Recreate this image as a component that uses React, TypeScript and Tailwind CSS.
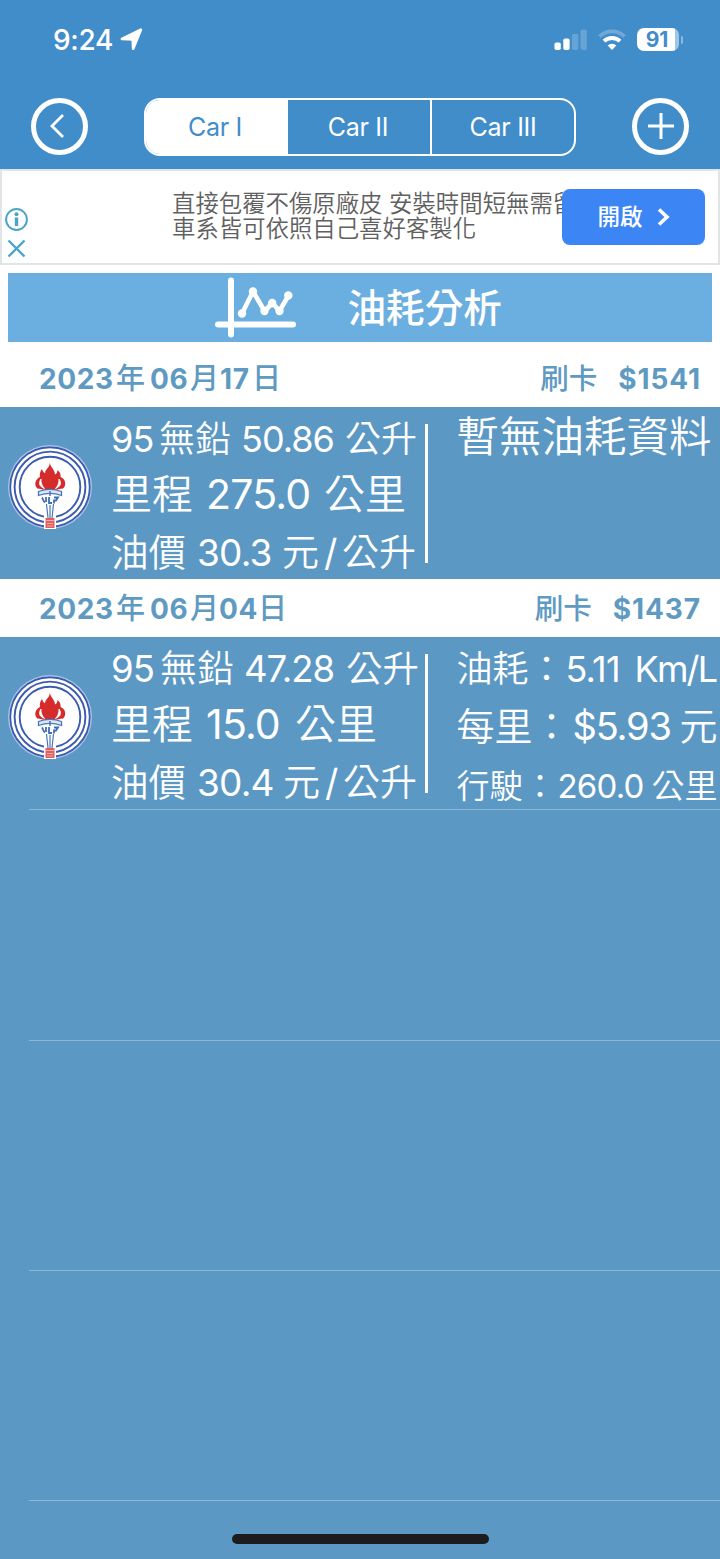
import React from 'react';

interface Segment {
  text: string;
  className: string;
}

interface FuelRecord {
  date: Segment[];
  price: string;
  left: Segment[][];
  right: Segment[][];
}

const records: FuelRecord[] = [
  {
    date: [
      { text: '2023', className: 'w-[77px] tracking-[0.6px]' },
      { text: '年', className: 'w-[34px] text-[29px] font-medium' },
      { text: '06', className: 'w-[40px] tracking-[0.6px]' },
      { text: '月', className: 'w-[30px] text-[29px] font-medium' },
      { text: '17', className: 'w-[32px] tracking-[0.6px]' },
      { text: '日', className: 'w-[30px] text-[29px] font-medium' },
    ],
    price: '$1541',
    left: [
      [
        { text: '95', className: 'w-[48px] -ml-px text-[36px] font-normal tracking-[-0.8px]' },
        { text: '無鉛', className: 'w-[82px] text-[36px]' },
        { text: '50.86', className: 'w-[104px] text-[36px] font-normal tracking-[-1px]' },
        { text: '公升', className: 'w-[74px] text-[36px]' },
      ],
      [
        { text: '里程', className: 'w-[95px] -ml-px text-[41px]' },
        { text: '275.0', className: 'w-[118px] text-[41px] font-normal tracking-[-0.8px]' },
        { text: '公里', className: 'w-[82px] text-[41px]' },
      ],
      [
        { text: '油價', className: 'w-[86px] -ml-px text-[37.5px]' },
        { text: '30.3', className: 'w-[85px] text-[37px] font-normal tracking-[-0.8px]' },
        { text: '元', className: 'w-[42px] text-[37px]' },
        { text: '/', className: 'w-[18px] text-[37px] font-normal' },
        { text: '公升', className: 'w-[75px] text-[37px]' },
      ],
    ],
    right: [[{ text: '暫無油耗資料', className: 'text-[42.5px]' }]],
  },
  {
    date: [
      { text: '2023', className: 'w-[77px] tracking-[0.6px]' },
      { text: '年', className: 'w-[34px] text-[29px] font-medium' },
      { text: '06', className: 'w-[40px] tracking-[0.6px]' },
      { text: '月', className: 'w-[29px] text-[29px] font-medium' },
      { text: '04', className: 'w-[39px] tracking-[0.6px]' },
      { text: '日', className: 'w-[30px] text-[29px] font-medium' },
    ],
    price: '$1437',
    left: [
      [
        { text: '95', className: 'w-[49px] -ml-px text-[36.5px] font-normal tracking-[-0.8px]' },
        { text: '無鉛', className: 'w-[84px] text-[37px]' },
        { text: '47.28', className: 'w-[102px] text-[36.5px] font-normal tracking-[-1px]' },
        { text: '公升', className: 'w-[74px] text-[36.5px]' },
      ],
      [
        { text: '里程', className: 'w-[95px] -ml-px text-[41px]' },
        { text: '15.0', className: 'w-[89px] text-[41px] font-normal tracking-[-0.8px]' },
        { text: '公里', className: 'w-[82px] text-[41px]' },
      ],
      [
        { text: '油價', className: 'w-[86px] -ml-px text-[37.5px]' },
        { text: '30.4', className: 'w-[86px] text-[37px] font-normal tracking-[-0.8px]' },
        { text: '元', className: 'w-[42px] text-[37px]' },
        { text: '/', className: 'w-[18px] text-[37px] font-normal' },
        { text: '公升', className: 'w-[74px] text-[37px]' },
      ],
    ],
    right: [
      [
        { text: '油耗', className: 'w-[72px] text-[36px]' },
        { text: '：', className: 'w-[37px] text-[36px]' },
        { text: '5.11', className: 'w-[69px] text-[36px] font-normal tracking-[-0.8px]' },
        { text: 'Km/L', className: 'w-[84px] text-[36px] font-normal tracking-[-1.8px]' },
      ],
      [
        { text: '每里', className: 'w-[76px] text-[38px]' },
        { text: '：', className: 'w-[40px] text-[38px]' },
        { text: '$5.93', className: 'w-[107px] text-[38px] font-normal tracking-[-1.2px]' },
        { text: '元', className: 'w-[38px] text-[38px]' },
      ],
      [
        { text: '行駛', className: 'w-[67px] text-[33px]' },
        { text: '：', className: 'w-[34px] text-[33px]' },
        { text: '260.0', className: 'w-[94px] text-[33px] font-normal tracking-[-0.8px]' },
        { text: '公里', className: 'w-[66px] text-[33px]' },
      ],
    ],
  },
];

const Line: React.FC<{ segments: Segment[]; className: string }> = ({ segments, className }) => (
  <div className={`flex items-center whitespace-nowrap ${className}`}>
    <div className="flex items-baseline leading-none">
      {segments.map((segment, i) => (
        <span key={i} className={`shrink-0 ${segment.className}`}>{segment.text}</span>
      ))}
    </div>
  </div>
);

const StatusBar = () => (
  <div className="flex h-[79px] items-center pl-[53px] pr-[37px] text-white">
    <span className="text-[28px] font-medium leading-none tracking-[-0.3px]">9:24</span>
    <svg className="ml-[7px] h-[23px] w-[23px]" viewBox="0 0 23 23">
      <path d="M20.8 1.8 13.2 20.6 12.8 11.4 2 10.9Z" fill="white" stroke="white" strokeWidth="2.8" strokeLinejoin="round" />
    </svg>
    <div className="ml-auto flex items-center">
      <svg className="h-[22px] w-[33px]" viewBox="0 0 33 22" fill="white">
        <rect x="0.5" y="13.5" width="6.3" height="7.5" rx="1.8" />
        <rect x="9.3" y="9.5" width="6.3" height="11.5" rx="1.8" />
        <rect x="18" y="5" width="6.3" height="16" rx="1.8" opacity="0.2" />
        <rect x="26.5" y="0.5" width="6.3" height="20.5" rx="1.8" opacity="0.2" />
      </svg>
      <svg className="ml-[11px] h-[22px] w-[28px]" viewBox="0 0 28 22" fill="none" stroke="white">
        <path d="M1.5 7.5a18 18 0 0 1 25 0" strokeWidth="3.8" opacity="0.25" />
        <path d="M6 12.2a11.6 11.6 0 0 1 16 0" strokeWidth="3.8" />
        <path d="M14 21l-4.3-4.5a6.2 6.2 0 0 1 8.6 0Z" fill="white" stroke="none" />
      </svg>
      <div className="ml-[11px] flex h-[23px] w-[42px] items-center justify-center rounded-[7px] bg-[linear-gradient(to_right,white_38px,#a0c6e5_38px)] pr-0.5 text-[21px] font-bold leading-none tracking-[-0.2px] text-[#418dca]">
        91
      </div>
      <div className="ml-0.5 h-2 w-0.5 rounded-r-full bg-white/40" />
    </div>
  </div>
);

const NavBar = () => (
  <div className="flex h-[90px] items-start justify-between pl-[31px] pr-[31px] pt-[18.5px] text-white">
    <button className="flex size-[57px] items-center justify-center rounded-full border-[5px] border-white">
      <svg className="mr-1.5 h-6 w-4" viewBox="0 0 16 24" fill="none" stroke="white" strokeWidth="2.8">
        <path d="M14 1 3 12l11 11" />
      </svg>
    </button>
    <div className="flex h-[58px] w-[432px] overflow-hidden rounded-2xl border-2 border-white text-[25px] leading-none tracking-[-0.3px]">
      <button className="w-[142px] bg-white pr-1 pt-0.5 text-[#418dca]">Car I</button>
      <button className="w-[144px] border-r-2 border-white pr-0.5 pt-0.5">Car II</button>
      <button className="flex-1 pt-0.5">Car III</button>
    </div>
    <button className="flex size-[57px] items-center justify-center rounded-full border-[5px] border-white">
      <svg className="size-[26px]" viewBox="0 0 26 26" stroke="white" strokeWidth="3">
        <path d="M13 0v26M0 13h26" />
      </svg>
    </button>
  </div>
);

const AdBanner = () => (
  <div className="relative flex h-24 border-2 border-[#e2e4e6] bg-white">
    <div className="w-[170px] pl-[3px] pt-[37px]">
      <svg className="size-[23px]" viewBox="0 0 23 23" fill="none" stroke="#4ba5c6">
        <circle cx="11.5" cy="11.5" r="10.4" strokeWidth="2" />
        <path d="M11.5 9.5v8.5" strokeWidth="3.4" />
        <circle cx="11.5" cy="6.2" r="2" fill="#4ba5c6" stroke="none" />
      </svg>
      <svg className="ml-0.5 mt-2 size-[19px]" viewBox="0 0 19 19" stroke="#4ba5c6" strokeWidth="2.4">
        <path d="M1.5 1.5l16 16M17.5 1.5l-16 16" />
      </svg>
    </div>
    <p className="whitespace-nowrap pt-5 text-[23.4px] font-[350] leading-[25px] text-[#606060]">
      直接包覆不傷原廠皮 安裝時間短無需留
      <br />
      車系皆可依照自己喜好客製化
    </p>
    <button className="absolute left-[560px] top-[18px] flex h-14 w-[143px] items-center justify-center gap-3.5 rounded-lg bg-[#3c85f5] text-[22.5px] font-medium leading-none text-white">
      開啟
      <svg className="h-[18px] w-[13px]" viewBox="0 0 13 18" fill="none" stroke="white" strokeWidth="3.6">
        <path d="M2 1.5 10 9l-8 7.5" />
      </svg>
    </button>
  </div>
);

const ChartIcon = () => (
  <svg className="h-[62px] w-[82px]" viewBox="0 0 82 62" fill="none" stroke="white" strokeLinecap="round" strokeLinejoin="round">
    <path d="M16 3.5v54M3 47.5h75" strokeWidth="6" />
    <path d="M27 36.5 38 14.5 49.5 34l8-8 7 8L73.5 18.5" strokeWidth="4.6" />
    <g fill="white" stroke="none">
      <circle cx="27" cy="36.5" r="4.2" />
      <circle cx="38" cy="14.5" r="4.2" />
      <circle cx="49.5" cy="34" r="4.2" />
      <circle cx="57.2" cy="26" r="4.2" />
      <circle cx="64.5" cy="34" r="4.2" />
      <circle cx="73.3" cy="18.5" r="4.2" />
    </g>
  </svg>
);

const StationLogo = () => (
  <svg className="ml-2 mt-[38px] size-[84px] shrink-0" viewBox="0 0 84 84">
    <circle cx="42" cy="42" r="42" fill="#a9c3e6" />
    <circle cx="42" cy="42" r="40.8" fill="white" />
    <g fill="none" stroke="#3a5bb0" strokeWidth="1.9">
      <circle cx="42" cy="42" r="39.8" />
      <circle cx="42" cy="42" r="35.4" />
      <circle cx="42" cy="42" r="30.3" />
    </g>
    <path d="M36 57h12v27H36Z" fill="white" />
    <path
      d="M41.8 17.5C42 22 47 24.5 47 29.5c1.8-1 2.6-2.7 2.3-4.6 2.6 1.8 3.6 4 3.3 7.1 3.2 1.2 4.9 4 4.6 7.2-.3 3.4-3.2 5.8-8.2 6.8H35c-4.6-1-7.5-3.3-7.7-6.7-.2-3 1.7-5.8 4.6-7.3-.3-3.1.1-5.8 2.1-8 .5 2 1.3 3.3 3.1 4.2 0-4.2 4.7-5.2 4.7-10.7Z"
      fill="#d62b2b"
    />
    <path d="M33 34c-2.8 4.500-1.600 7.600 3.500 9.500-2.600-3-3.600-5.500-3.500-9.500ZM51 34c2.800 4.500 1.600 7.600-3.500 9.500 2.600-3 3.600-5.500 3.500-9.500Z" fill="#fff" stroke="#fff" strokeWidth="0.8" />
    <path d="M30 43.500c8 2 16 2 24 0v3H30Z" fill="white" />
    <path d="M30.500 46.500c7-2.500 16-2.500 23 0v4c-7-2.500-16-2.500-23 0Z" fill="#dce7f5" stroke="#4a76ba" strokeWidth="1.3" />
    <path d="M42 46v5" stroke="#4a76ba" strokeWidth="1.5" />
    <path d="M34 52.500c1 1 1 4 3 5M38 52v5M41 52v6h3M46 52.500h4l-2 3h-2v3" fill="none" stroke="#3f6fb7" strokeWidth="1.8" />
    <path d="M38.500 59l1.500 14M42 60v13M45.500 59 44 73" fill="none" stroke="#4a76ba" strokeWidth="1.2" />
    <path d="M37.500 73h9v10h-9Z" fill="#e05f5f" />
    <path d="M38 75.500h8M39 78.500h6M39 81h6" stroke="#fff" strokeWidth="0.8" opacity="0.6" />
  </svg>
);

const RecordRow: React.FC<{ record: FuelRecord; single: boolean }> = ({ record, single }) => (
  <div className="flex h-[172px] overflow-hidden font-[350] text-white">
    <StationLogo />
    <div className="ml-5 w-[313px] shrink-0 pt-2">
      <Line segments={record.left[0]} className="h-12" />
      <Line segments={record.left[1]} className="h-[62px]" />
      <Line segments={record.left[2]} className="h-[56px]" />
    </div>
    <div className="mt-[17px] h-[139px] w-[3px] shrink-0 bg-white" />
    <div className={`ml-[28.5px] w-[263px] shrink-0 ${single ? 'pt-[6px]' : 'pt-2'}`}>
      <Line segments={record.right[0]} className="h-12" />
      {!single && (
        <>
          <Line segments={record.right[1]} className="h-[66px]" />
          <Line segments={record.right[2]} className="h-[54px]" />
        </>
      )}
    </div>
  </div>
);

const App = () => {
  return (
    <div className="relative flex h-[1559px] w-[720px] flex-col overflow-hidden bg-[#5c98c4] font-['Inter','Noto_Sans_CJK_TC',sans-serif]">
      <header className="h-[169px] shrink-0 bg-[#418dca]">
        <StatusBar />
        <NavBar />
      </header>
      <section className="h-[180px] shrink-0 bg-white">
        <AdBanner />
        <div className="mx-2 mt-2 flex h-[69px] items-center bg-[#6bafe0] pl-[207px] text-white">
          <ChartIcon />
          <span className="ml-[50.5px] pt-0.5 text-[38.6px] font-medium leading-none">油耗分析</span>
        </div>
      </section>
      <main className="flex-1">
        {records.map((record) => (
          <article key={record.price}>
            <div className="flex h-[58px] items-center justify-between bg-white pl-[39px] pr-[19px] text-[28px] font-bold text-[#5f9ac2]">
              <Line segments={record.date} className="h-full" />
              <div className="flex items-baseline gap-[21px] pt-0.5 leading-none">
                <span className="text-[28.5px] font-medium">刷卡</span>
                <span className="tracking-[0.9px]">{record.price}</span>
              </div>
            </div>
            <RecordRow record={record} single={record.right.length === 1} />
          </article>
        ))}
        <div className="ml-[29px] h-px bg-[#8eb7d8]" />
        <div className="ml-[29px] h-[231px] border-b border-[#8eb7d8]" />
        <div className="ml-[29px] h-[230px] border-b border-[#8eb7d8]" />
        <div className="ml-[29px] h-[230px] border-b border-[#8eb7d8]" />
      </main>
      <div className="absolute bottom-[15.5px] left-[232px] h-[9.5px] w-[257px] rounded-full bg-[#1c1c1e]" />
    </div>
  );
};

export default App;
